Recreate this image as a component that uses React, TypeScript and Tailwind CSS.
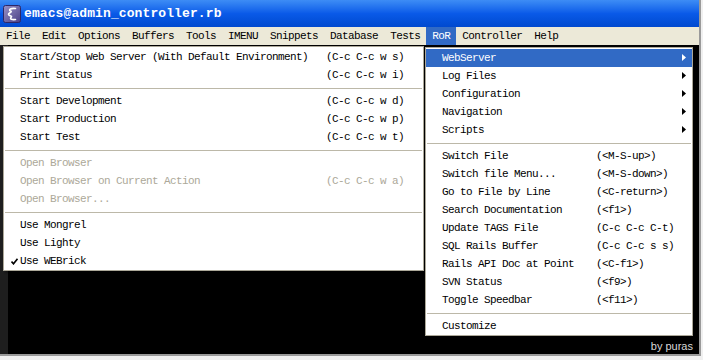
import React from "react";

type Entry =
  | "sep"
  | {
      label: string;
      keys?: string;
      disabled?: boolean;
      checked?: boolean;
      sub?: boolean;
      active?: boolean;
    };

const menuBar = ["File", "Edit", "Options", "Buffers", "Tools", "IMENU", "Snippets", "Database", "Tests", "RoR", "Controller", "Help"];

const webServerMenu: Entry[] = [
  { label: "Start/Stop Web Server (With Default Environment)", keys: "(C-c C-c w s)" },
  { label: "Print Status", keys: "(C-c C-c w i)" },
  "sep",
  { label: "Start Development", keys: "(C-c C-c w d)" },
  { label: "Start Production", keys: "(C-c C-c w p)" },
  { label: "Start Test", keys: "(C-c C-c w t)" },
  "sep",
  { label: "Open Browser", disabled: true },
  { label: "Open Browser on Current Action", keys: "(C-c C-c w a)", disabled: true },
  { label: "Open Browser...", disabled: true },
  "sep",
  { label: "Use Mongrel" },
  { label: "Use Lighty" },
  { label: "Use WEBrick", checked: true },
];

const rorMenu: Entry[] = [
  { label: "WebServer", sub: true, active: true },
  { label: "Log Files", sub: true },
  { label: "Configuration", sub: true },
  { label: "Navigation", sub: true },
  { label: "Scripts", sub: true },
  "sep",
  { label: "Switch File", keys: "(<M-S-up>)" },
  { label: "Switch file Menu...", keys: "(<M-S-down>)" },
  { label: "Go to File by Line", keys: "(<C-return>)" },
  { label: "Search Documentation", keys: "(<f1>)" },
  { label: "Update TAGS File", keys: "(C-c C-c C-t)" },
  { label: "SQL Rails Buffer", keys: "(C-c C-c s s)" },
  { label: "Rails API Doc at Point", keys: "(<C-f1>)" },
  { label: "SVN Status", keys: "(<f9>)" },
  { label: "Toggle Speedbar", keys: "(<f11>)" },
  "sep",
  { label: "Customize" },
];

function EmacsIcon() {
  return (
    <svg width="18" height="18" viewBox="0 0 18 18">
      <defs>
        <linearGradient id="eg" x1="0" y1="0" x2="1" y2="1">
          <stop offset="0" stopColor="#9a93c8" />
          <stop offset="1" stopColor="#4a3f86" />
        </linearGradient>
      </defs>
      <rect x="0.5" y="0.5" width="17" height="17" rx="2" fill="url(#eg)" stroke="#2e2766" />
      <path
        d="M12.5 3.5 C8 3 5 4.5 7.5 6 C10 7.2 5 8 5.5 9.5 C6 11 10 10.5 8 12.5 C6.5 14 9 15 12.5 14.5"
        fill="none"
        stroke="#fff"
        strokeWidth="1.6"
        strokeLinecap="round"
      />
    </svg>
  );
}

function Arrow({ light }: { light?: boolean }) {
  return (
    <svg width="4" height="7" viewBox="0 0 4 7" className="absolute right-[6px] top-[5px]">
      <path d="M0 0 L4 3.5 L0 7 Z" fill={light ? "#ffffff" : "#000000"} />
    </svg>
  );
}

function Check() {
  return (
    <svg width="7" height="7" viewBox="0 0 7 7" className="absolute left-[7px] top-[6px]">
      <path d="M0.5 3.5 L2.5 5.8 L6.5 0.8" fill="none" stroke="#000" strokeWidth="1.6" />
    </svg>
  );
}

function Menu({ entries, labelWidth, className }: { entries: Entry[]; labelWidth: string; className: string }) {
  return (
    <div
      className={`absolute border border-[#aca899] bg-white shadow-[2px_2px_2px_rgba(0,0,0,0.35)] font-['Liberation_Mono','DejaVu_Sans_Mono',monospace] text-[11px] tracking-[-0.6px] ${className}`}
    >
      {entries.map((entry, i) => {
        if (entry === "sep") {
          return (
            <div key={i} className="flex h-[8px] items-center px-px">
              <div className="h-px w-full bg-[#bcb8a8]" />
            </div>
          );
        }
        const color = entry.active ? "text-white bg-[#316ac5]" : entry.disabled ? "text-[#aca899]" : "text-black";
        return (
          <div key={i} className={`relative flex h-[18px] items-center whitespace-pre pl-[16px] leading-[18px] ${color}`}>
            {entry.checked ? <Check /> : null}
            <span className={labelWidth}>{entry.label}</span>
            {entry.keys ? <span>{entry.keys}</span> : null}
            {entry.sub ? <Arrow light={entry.active} /> : null}
          </div>
        );
      })}
    </div>
  );
}

export default function App() {
  return (
    <div className="relative h-[360px] w-[703px] overflow-hidden bg-[#f0f0f0]">
      <div className="flex h-[356px] w-[701px] flex-col border-r-2 border-b-2 border-[#9a9a9a]">
        <div className="flex h-[27px] items-center gap-[3px] bg-gradient-to-b from-[#3d8cf5] via-[#0a5ae8] to-[#0049cf] pl-[3px]">
          <EmacsIcon />
          <span className="font-['Liberation_Mono','DejaVu_Sans_Mono',monospace] text-[13px] font-bold tracking-[0.1px] text-white">
            emacs@admin_controller.rb
          </span>
        </div>
        <div className="flex h-[18px] items-stretch bg-[#ece9d8] font-['Liberation_Mono','DejaVu_Sans_Mono',monospace] text-[11px] tracking-[-0.6px] text-black">
          {menuBar.map((name) => (
            <div
              key={name}
              className={`flex items-center whitespace-pre px-[6px] ${name === "RoR" ? "bg-[#316ac5] text-white" : ""}`}
            >
              {name}
            </div>
          ))}
        </div>
        <div className="flex flex-1">
          <div className="w-[8px] bg-[#1e1e1e]" />
          <div className="flex-1 bg-black" />
        </div>
      </div>

      <Menu entries={webServerMenu} labelWidth="w-[306px]" className="left-[3px] top-[46px] w-[421px] pt-px" />
      <Menu entries={rorMenu} labelWidth="w-[154px]" className="left-[425px] top-[47px] w-[268px] pt-px" />

      <span className="absolute right-[10px] top-[338px] font-['Liberation_Sans',Arial,sans-serif] text-[11px] text-[#d8d8d8]">
        by puras
      </span>
    </div>
  );
}
